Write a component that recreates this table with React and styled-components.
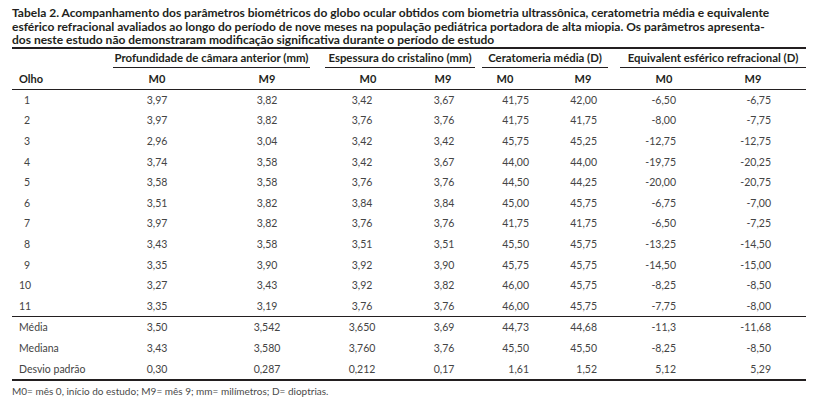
import React from 'react';
import styled, { createGlobalStyle } from 'styled-components';

const GlobalStyle = createGlobalStyle`
  html, body {
    margin: 0;
    padding: 0;
    background: #ffffff;
  }
  body {
    font-family: Lato, "Open Sans", sans-serif;
    color: #231f20;
  }
`;

// column widths sum to 794 (x 12 -> 806)
const COLUMNS = '100px 100px 110px 80px 78px 60px 70px 100px 96px';

// where the values sit in each column
const dataCols = [
  { align: 'left', pl: 7, pr: 0 },
  { align: 'center', pl: 0, pr: 10 },
  { align: 'center', pl: 0, pr: 0 },
  { align: 'center', pl: 0, pr: 0 },
  { align: 'center', pl: 6, pr: 0 },
  { align: 'right', pl: 0, pr: 11 },
  { align: 'right', pl: 0, pr: 13 },
  { align: 'right', pl: 0, pr: 34 },
  { align: 'right', pl: 0, pr: 35 },
];

const headCols = [
  { align: 'left', pl: 7, pr: 0 },
  { align: 'center', pl: 0, pr: 10 },
  { align: 'center', pl: 0, pr: 0 },
  { align: 'center', pl: 12, pr: 0 },
  { align: 'center', pl: 4, pr: 0 },
  { align: 'center', pl: 0, pr: 10 },
  { align: 'center', pl: 16, pr: 0 },
  { align: 'center', pl: 8, pr: 0 },
  { align: 'center', pl: 0, pr: 10 },
];

const groups = [
  { label: 'Profundidade de câmara anterior (mm)', span: '2 / 4', ml: 1, mr: 12 },
  { label: 'Espessura do cristalino (mm)', span: '4 / 6', ml: 3, mr: 5 },
  { label: 'Ceratomeria média (D)', span: '6 / 8', ml: 2, mr: 2 },
  { label: 'Equivalent esférico refracional (D)', span: '8 / 10', ml: 10, mr: 0 },
];

const rows = [
  ['1', '3,97', '3,82', '3,42', '3,67', '41,75', '42,00', '-6,50', '-6,75'],
  ['2', '3,97', '3,82', '3,76', '3,76', '41,75', '41,75', '-8,00', '-7,75'],
  ['3', '2,96', '3,04', '3,42', '3,42', '45,75', '45,25', '-12,75', '-12,75'],
  ['4', '3,74', '3,58', '3,42', '3,67', '44,00', '44,00', '-19,75', '-20,25'],
  ['5', '3,58', '3,58', '3,76', '3,76', '44,50', '44,25', '-20,00', '-20,75'],
  ['6', '3,51', '3,82', '3,84', '3,84', '45,00', '45,75', '-6,75', '-7,00'],
  ['7', '3,97', '3,82', '3,76', '3,76', '41,75', '41,75', '-6,50', '-7,25'],
  ['8', '3,43', '3,58', '3,51', '3,51', '45,50', '45,75', '-13,25', '-14,50'],
  ['9', '3,35', '3,90', '3,92', '3,90', '45,75', '45,75', '-14,50', '-15,00'],
  ['10', '3,27', '3,43', '3,92', '3,82', '46,00', '45,75', '-8,25', '-8,50'],
  ['11', '3,35', '3,19', '3,76', '3,76', '46,00', '45,75', '-7,75', '-8,00'],
];

const stats = [
  ['Média', '3,50', '3,542', '3,650', '3,69', '44,73', '44,68', '-11,3', '-11,68'],
  ['Mediana', '3,43', '3,580', '3,760', '3,76', '45,50', '45,50', '-8,25', '-8,50'],
  ['Desvio padrão', '0,30', '0,287', '0,212', '0,17', '1,61', '1,52', '5,12', '5,29'],
];

const App = () => {
  return (
    <Page>
      <GlobalStyle />
      <Caption>
        Tabela 2. Acompanhamento dos parâmetros biométricos do globo ocular obtidos com biometria ultrassônica, ceratometria média e equivalente
        <br />
        esférico refracional avaliados ao longo do período de nove meses na população pediátrica portadora de alta miopia. Os parâmetros apresenta-
        <br />
        dos neste estudo não demonstraram modificação significativa durante o período de estudo
      </Caption>

      <Table>
        <GroupRow>
          {groups.map((g) => (
            <GroupHead key={g.label} style={{ gridColumn: g.span }} $ml={g.ml} $mr={g.mr}>
              {g.label}
            </GroupHead>
          ))}
        </GroupRow>

        <HeadRow>
          {['Olho', 'M0', 'M9', 'M0', 'M9', 'M0', 'M9', 'M0', 'M9'].map((h, i) => (
            <HeadCell key={i} {...colProps(headCols[i])}>
              {h}
            </HeadCell>
          ))}
        </HeadRow>

        {rows.map((r, ri) => (
          <DataRow key={r[0]} $rule={ri === rows.length - 1}>
            {r.map((v, i) => (
              <Cell key={i} {...colProps(dataCols[i])}>
                {i === 0 ? <EyeNo>{v}</EyeNo> : v}
              </Cell>
            ))}
          </DataRow>
        ))}

        {stats.map((r) => (
          <DataRow key={r[0]} $tall>
            {r.map((v, i) => (
              <Cell key={i} {...colProps(dataCols[i])}>
                {v}
              </Cell>
            ))}
          </DataRow>
        ))}
      </Table>

      <Footnote>M0= mês 0, início do estudo; M9= mês 9; mm= milímetros; D= dioptrias.</Footnote>
    </Page>
  );
};

const colProps = (c) => ({ $align: c.align, $pl: c.pl, $pr: c.pr });

export default App;

const Page = styled.div`
  width: 794px;
  padding: 6px 11px 0 12px;
`;

const Caption = styled.p`
  margin: 0;
  font-family: Lato, sans-serif;
  font-weight: 700;
  font-size: 12px;
  line-height: 13.5px;
  letter-spacing: 0;
  white-space: nowrap;
  color: #231f20;
`;

const Table = styled.div`
  border-top: 2px solid #231f20;
  border-bottom: 2px solid #231f20;
`;

const GridRow = styled.div`
  display: grid;
  grid-template-columns: ${COLUMNS};
  align-items: center;
`;

const GroupRow = styled(GridRow)`
  height: 19px;
  align-items: stretch;
`;

const GroupHead = styled.div`
  margin: 0 ${(p) => p.$mr}px 0 ${(p) => p.$ml}px;
  border-bottom: 1px solid #231f20;
  font-weight: 700;
  font-size: 11.4px;
  line-height: 18px;
  text-align: center;
  white-space: nowrap;
`;

const HeadRow = styled(GridRow)`
  height: 21px;
  border-bottom: 1px solid #231f20;
`;

const Cell = styled.div`
  text-align: ${(p) => p.$align};
  padding-left: ${(p) => p.$pl}px;
  padding-right: ${(p) => p.$pr}px;
  white-space: nowrap;
  font-size: 10.5px;
  color: #444444;
`;

const HeadCell = styled(Cell)`
  font-weight: 700;
  font-size: 11px;
  color: #231f20;
`;

const DataRow = styled(GridRow)`
  height: ${(p) => (p.$tall ? '20.8px' : '20.6px')};
  border-bottom: ${(p) => (p.$rule ? '1px solid #231f20' : 'none')};
`;

const EyeNo = styled.span`
  display: inline-block;
  min-width: 11px;
  text-align: right;
`;

const Footnote = styled.p`
  margin: 4px 0 0 0;
  font-size: 10px;
  line-height: 12px;
  color: #4a4a4a;
`;
